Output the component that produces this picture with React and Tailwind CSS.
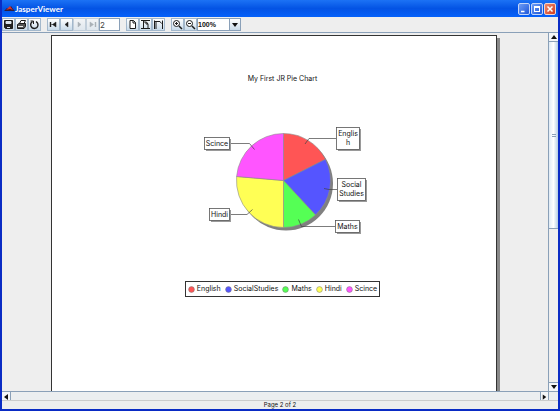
import React from "react";

const BORDER = "border-[#8aa0b8]";

function ToolButton({ label, disabled, children }) {
  return (
    <button
      type="button"
      aria-label={label}
      disabled={disabled}
      className="flex h-[13px] w-[13px] shrink-0 items-center justify-center border border-[#a3b8cc] bg-linear-to-b from-white to-[#c9dbea] text-[#1c1c1c] disabled:border-[#c2cfdb] disabled:from-[#f2f4f6] disabled:to-[#dfe7ee] disabled:text-[#a9b0b6]"
    >
      <svg viewBox="0 0 11 11" className="h-[11px] w-[11px]" fill="none" stroke="currentColor" aria-hidden="true">
        {children}
      </svg>
    </button>
  );
}

function WindowButton({ label, close, children }) {
  return (
    <button
      type="button"
      aria-label={label}
      className={
        close
          ? "h-3 w-3 rounded-xs border border-[#f4d5cc] bg-linear-to-br from-[#ee8a6c] to-[#d0391a]"
          : "h-3 w-3 rounded-xs border border-[#c3d5f8] bg-linear-to-br from-[#6d9cf5] to-[#1f55d8]"
      }
    >
      <svg viewBox="0 0 10 10" className="h-[10px] w-[10px]" fill="none" stroke="#fff" aria-hidden="true">
        {children}
      </svg>
    </button>
  );
}

function ScrollArrow({ label, points, className }) {
  return (
    <button
      type="button"
      aria-label={label}
      className={`flex h-[9px] w-[9px] shrink-0 items-center justify-center bg-[#f4f6f8] ${className}`}
    >
      <svg viewBox="0 0 8 8" className="h-2 w-2" aria-hidden="true">
        <polygon points={points} fill="#111" />
      </svg>
    </button>
  );
}

const slices = [
  { name: "English", color: "#ff5555", d: "M283.5 180.5V133.5A47 47 0 0 1 325.5 159.3Z" },
  { name: "SocialStudies", color: "#5555ff", d: "M283.5 180.5L325.5 159.3A47 47 0 0 1 315.5 215Z" },
  { name: "Maths", color: "#55ff55", d: "M283.5 180.5L315.5 215A47 47 0 0 1 283.5 227.5Z" },
  { name: "Hindi", color: "#ffff55", d: "M283.5 180.5V227.5A47 47 0 0 1 236.6 176.5Z" },
  { name: "Scince", color: "#ff55ff", d: "M283.5 180.5L236.6 176.5A47 47 0 0 1 283.5 133.5Z" },
];

const labels = [
  { lines: ["Englis", "h"], x: 336, y: 127, w: 23, h: 22, lead: "M305 144L309 138.5H336" },
  { lines: ["Social", "Studies"], x: 337, y: 178, w: 28, h: 22, lead: "M324 188.5L329 189.5H337" },
  { lines: ["Maths"], x: 335, y: 220, w: 24, h: 12, lead: "M298.500 219.500L301.500 226.500H335" },
  { lines: ["Hindi"], x: 209, y: 208, w: 20, h: 12, lead: "M252.500 209.500L247 214.500H229" },
  { lines: ["Scince"], x: 204, y: 137, w: 25, h: 12, lead: "M254.500 149.500L249.500 143.500H229" },
];

function PieChart() {
  return (
    <svg viewBox="198 120 170 120" className="mt-[37px] h-[120px] w-[170px]" role="img" aria-label="Pie chart">
      <circle cx="286" cy="183.500" r="47" fill="#808080" />
      {slices.map((s) => (
        <path key={s.name} d={s.d} fill={s.color} stroke="#8c8c8c" strokeWidth="0.6" />
      ))}
      {labels.map((l) => (
        <g key={l.lines[0]}>
          <path d={l.lead} fill="none" stroke="#444" strokeWidth="0.7" />
          <rect x={l.x + 2} y={l.y + 2} width={l.w} height={l.h} fill="#9a9a9a" />
          <rect x={l.x + 0.5} y={l.y + 0.5} width={l.w} height={l.h} fill="#fff" stroke="#555" strokeWidth="0.8" />
          {l.lines.map((t, i) => (
            <text key={t} x={l.x + l.w / 2 + 0.5} y={l.y + 9 + i * 9} textAnchor="middle" className="text-[7px]" fill="#111">
              {t}
            </text>
          ))}
        </g>
      ))}
    </svg>
  );
}

export default function App() {
  return (
    <div className="flex h-screen flex-col overflow-hidden border-x-2 border-b-2 border-[#0a2bc4] bg-[#0a2bc4] font-['Inter','Liberation_Sans',sans-serif] text-[7px] text-[#111]">
      <header className="flex h-[17px] shrink-0 items-center bg-linear-to-b from-[#1c72f5] via-[#0453e4] to-[#0561fa] px-[2px]">
        <svg viewBox="0 0 11 8" className="h-2 w-[11px]" aria-hidden="true">
          <path d="M0 6L3 3L5 4L7 1L9 4L11 6Z" fill="#301c3c" />
          <path d="M2 5L6 1L9 5L6 4Z" fill="#d9342a" />
        </svg>
        <h1 className="font-['Lato',sans-serif] text-[8px] font-bold text-white">JasperViewer</h1>
        <div className="ml-auto flex gap-px">
          <WindowButton label="Minimize"><path d="M2 7.500H5.500" strokeWidth="1.500" /></WindowButton>
          <WindowButton label="Maximize"><path d="M2 2.500H8M2.500 2V8M7.500 2V8M2 7.500H8M2 3.500H8" /></WindowButton>
          <WindowButton label="Close" close><path d="M2.500 2.500L7.500 7.500M7.500 2.500L2.500 7.500" strokeWidth="1.500" /></WindowButton>
        </div>
      </header>

      <div role="toolbar" aria-label="Viewer" className="flex h-[15px] shrink-0 items-center gap-[6px] bg-[#eeeeee]">
        <div className="flex">
          <ToolButton label="Save">
            <path d="M1.500 1.500H9.500V9.500H2.500L1.500 8.500Z" fill="#222" />
            <path d="M3 2.500H8V4.500H3Z" fill="#dde6ee" stroke="#dde6ee" />
            <path d="M4 8.500H7" stroke="#dde6ee" />
          </ToolButton>
          <ToolButton label="Print">
            <path d="M3.500 4.500L5 1.500H9.500L8 4.500Z" fill="#fff" />
            <path d="M1.500 5.500L3 4.500H9.500V7.500L8 9.500H1.500Z" fill="#555" />
            <path d="M2 7.500H7" stroke="#eee" />
          </ToolButton>
          <ToolButton label="Reload">
            <path d="M3.500 2.500C0 5 2 9.500 5.500 9.500C9 9.500 10.500 5 7 2.500" strokeWidth="1.300" />
            <path d="M1.500 2H4.500V5" />
          </ToolButton>
        </div>
        <div className="flex">
          <ToolButton label="First page">
            <path d="M2.500 3V8" strokeWidth="1.400" />
            <path d="M8 3V8L4.500 5.500ZM3 5.500H5" fill="currentColor" strokeWidth="0.500" />
          </ToolButton>
          <ToolButton label="Previous page"><path d="M7 3V8L4 5.500Z" fill="currentColor" strokeWidth="0.500" /></ToolButton>
          <ToolButton label="Next page" disabled><path d="M4 3V8L7 5.500Z" fill="currentColor" strokeWidth="0.500" /></ToolButton>
          <ToolButton label="Last page" disabled>
            <path d="M8.500 3V8" strokeWidth="1.400" />
            <path d="M3 3V8L6.500 5.500Z" fill="currentColor" strokeWidth="0.500" />
          </ToolButton>
          <input aria-label="Page number" defaultValue="2" className={`h-[13px] w-[21px] border bg-white text-[8px] text-[#444] ${BORDER}`} />
        </div>
        <div className="flex">
          <ToolButton label="Actual size"><path d="M3 1.500H6.500L8.500 3.500V9.500H3ZM6 1.500V4H8.500" fill="#fff" /></ToolButton>
          <ToolButton label="Fit page"><path d="M1 1.500H10M1 9.500H10M3.500 2V9M3.500 3H6.500L8 5V9M6 3V5H8" /></ToolButton>
          <ToolButton label="Fit width"><path d="M1.500 10V1.500M9.500 10V1.500M3 10V2.500H7L8.500 4.500M1.500 2.500H3" /></ToolButton>
        </div>
        <div className="flex">
          <ToolButton label="Zoom in">
            <circle cx="4.500" cy="4.500" r="3" fill="#fff" />
            <path d="M3 4.500H6M4.500 3V6" />
            <path d="M7 7L10 10" strokeWidth="1.500" />
          </ToolButton>
          <ToolButton label="Zoom out">
            <circle cx="4.500" cy="4.500" r="3" fill="#fff" />
            <path d="M3 4.500H6" />
            <path d="M7 7L10 10" strokeWidth="1.500" />
          </ToolButton>
          <div className={`relative h-[13px] w-11 border bg-white ${BORDER}`}>
            <select aria-label="Zoom" defaultValue="100%" className="block h-full w-full appearance-none font-['Liberation_Sans',sans-serif] text-[7px] leading-[11px] font-bold">
              <option>50%</option>
              <option>100%</option>
              <option>200%</option>
            </select>
            <span className={`pointer-events-none absolute inset-y-0 right-0 flex w-[11px] items-center justify-center border-l bg-linear-to-b from-white to-[#c9dbea] ${BORDER}`}>
              <svg viewBox="0 0 6 4" className="h-1 w-[6px]" aria-hidden="true"><polygon points="0,0 6,0 3,4" fill="#111" /></svg>
            </span>
          </div>
        </div>
      </div>

      <div className={`flex min-h-0 flex-1 border-t bg-[#eeeeee] ${BORDER}`}>
        <main className="flex min-w-0 flex-1 justify-center overflow-hidden pt-[2px]">
          <article className="flex w-[446px] shrink-0 flex-col items-center border-x border-t border-[#333] bg-white pl-[18px]">
            <h2 className="mt-[38px] text-[7px] leading-[9px]">My First JR Pie Chart</h2>
            <PieChart />
            <ul className="mt-[41px] flex h-4 items-center gap-1 border border-[#333] px-[2px]">
              {slices.map((s) => (
                <li key={s.name} className="flex items-center gap-[2px] whitespace-nowrap">
                  <svg viewBox="0 0 7 7" className="h-[7px] w-[7px]" aria-hidden="true">
                    <circle cx="3.500" cy="3.500" r="2.900" fill={s.color} stroke="#777" strokeWidth="0.500" />
                  </svg>
                  {s.name}
                </li>
              ))}
            </ul>
          </article>
          <div className="mt-[3px] w-[3px] shrink-0 bg-[#888]" />
        </main>
        <div className={`flex w-[10px] shrink-0 flex-col border-l ${BORDER}`}>
          <ScrollArrow label="Scroll up" points="4,2 7,6 1,6" className={`border-b ${BORDER}`} />
          <div className="flex flex-1 flex-col">
            <div className={`flex h-[55%] flex-col items-center justify-center gap-px border-b bg-linear-to-r from-[#dfeaf5] via-white to-[#b5cde3] ${BORDER}`}>
              <span className="h-px w-1 bg-[#8aa0b8]" />
              <span className="h-px w-1 bg-[#8aa0b8]" />
            </div>
          </div>
          <ScrollArrow label="Scroll down" points="1,2 7,2 4,6" className={`border-t ${BORDER}`} />
        </div>
      </div>

      <div className={`flex h-[9px] shrink-0 justify-between border-t bg-[#ebeef0] pr-[9px] ${BORDER}`}>
        <ScrollArrow label="Scroll left" points="2,4 6,1 6,7" className={`border-r ${BORDER}`} />
        <ScrollArrow label="Scroll right" points="6,4 2,1 2,7" className={`border-x ${BORDER}`} />
      </div>
      <footer className="flex h-[9px] shrink-0 items-center justify-center border-t border-[#cccccc] bg-[#eeeeee] text-[6px] leading-none">
        Page 2 of 2
      </footer>
    </div>
  );
}
